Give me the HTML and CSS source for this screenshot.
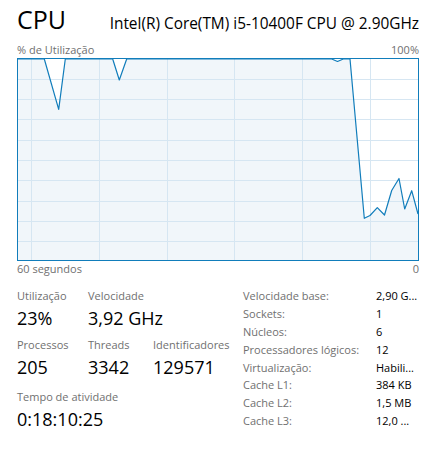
FILE: index.html
```html
<!DOCTYPE html>
<html lang="pt">
	<head>
		<meta charset="UTF-8">
		<title>CPU</title>
		<link rel="stylesheet" href="styles.css">
	</head>
	<body>
		<div class="page">
			<!--titulo-->
			<div class="header">
				<span class="title">CPU</span>
				<span class="model">Intel(R) Core(TM) i5-10400F CPU @ 2.90GHz</span>
			</div>

			<!--grafico-->
			<div class="axis">
				<span>% de Utilização</span>
				<span>100%</span>
			</div>
			<svg class="chart" width="402" height="203" viewBox="0 0 402 203">
				<rect x="0" y="0" width="402" height="203" fill="#fff" />
				<polygon class="fill" points="0,1 27.3,1 41.7,51.3 48.3,1 95.7,1 102.3,22 109.7,1 314.7,1 320.5,3.5 326.3,1 333,1 347.3,160.3 353,157.5 360.3,149.7 367.5,157 374.7,132.5 382,120.5 387.7,151 394.7,132.7 401,156 401,202 0,202" />
				<g class="grid">
					<line x1="14.5" y1="0" x2="14.5" y2="203" />
					<line x1="82.5" y1="0" x2="82.5" y2="203" />
					<line x1="150.5" y1="0" x2="150.5" y2="203" />
					<line x1="217.5" y1="0" x2="217.5" y2="203" />
					<line x1="285.5" y1="0" x2="285.5" y2="203" />
					<line x1="353.5" y1="0" x2="353.5" y2="203" />
					<line x1="0" y1="21.5" x2="402" y2="21.5" />
					<line x1="0" y1="41.5" x2="402" y2="41.5" />
					<line x1="0" y1="61.5" x2="402" y2="61.5" />
					<line x1="0" y1="82.5" x2="402" y2="82.5" />
					<line x1="0" y1="102.5" x2="402" y2="102.5" />
					<line x1="0" y1="122.5" x2="402" y2="122.5" />
					<line x1="0" y1="143.5" x2="402" y2="143.5" />
					<line x1="0" y1="163.5" x2="402" y2="163.5" />
					<line x1="0" y1="183.5" x2="402" y2="183.5" />
				</g>
				<polyline class="line" points="0,1 27.3,1 41.7,51.3 48.3,1 95.7,1 102.3,22 109.7,1 314.7,1 320.5,3.5 326.3,1 333,1 347.3,160.3 353,157.5 360.3,149.7 367.5,157 374.7,132.5 382,120.5 387.7,151 394.7,132.7 401,156" />
				<rect class="frame" x="0.5" y="0.5" width="401" height="202" />
			</svg>
			<div class="axis axis-bottom">
				<span>60 segundos</span>
				<span>0</span>
			</div>

			<!--dados-->
			<div class="stats">
				<div class="live">
					<div class="cell">
						<div class="label">Utilização</div>
						<div class="value">23%</div>
					</div>
					<div class="cell">
						<div class="label">Velocidade</div>
						<div class="value">3,92 GHz</div>
					</div>
					<div class="cell"></div>
					<div class="cell">
						<div class="label">Processos</div>
						<div class="value">205</div>
					</div>
					<div class="cell">
						<div class="label">Threads</div>
						<div class="value">3342</div>
					</div>
					<div class="cell">
						<div class="label">Identificadores</div>
						<div class="value">129571</div>
					</div>
					<div class="cell wide">
						<div class="label">Tempo de atividade</div>
						<div class="value">0:18:10:25</div>
					</div>
				</div>
				<div class="specs">
					<span class="key">Velocidade base:</span><span>2,90 G...</span>
					<span class="key">Sockets:</span><span>1</span>
					<span class="key">Núcleos:</span><span>6</span>
					<span class="key">Processadores lógicos:</span><span>12</span>
					<span class="key">Virtualização:</span><span>Habili...</span>
					<span class="key">Cache L1:</span><span>384 KB</span>
					<span class="key">Cache L2:</span><span>1,5 MB</span>
					<span class="key">Cache L3:</span><span>12,0 ...</span>
				</div>
			</div>
		</div>
	</body>
</html>
```

FILE: styles.css
```css
* {
	margin: 0;
	padding: 0
}

body {
	background-color: #fff;
	font-family: "Open Sans", "Noto Sans", sans-serif;
	color: #000;
}

.page {
	width: 402px;
	padding: 3px 18px 0 17px;
}

.header {
	display: flex;
	justify-content: space-between;
	align-items: baseline;
	height: 32px;
	line-height: 32px;
}

.title {
	font-size: 25px;
}

.model {
	font-size: 15.4px;
	line-height: 20px;
}

.axis {
	display: flex;
	justify-content: space-between;
	margin-top: 7px;
	font-size: 11px;
	line-height: 15px;
	color: #707070;
}

.axis-bottom {
	margin-top: 0;
}

.chart {
	display: block;
	margin-top: 1px;
}

.chart .fill {
	fill: #f1f6fa;
}

.chart .grid line {
	stroke: #d6e6f2;
	stroke-width: 1;
}

.chart .line {
	fill: none;
	stroke: #117dbb;
	stroke-width: 1.2;
	stroke-linejoin: round;
}

.chart .frame {
	fill: none;
	stroke: #117dbb;
	stroke-width: 1;
}

.stats {
	display: flex;
	margin-top: 10px;
}

.live {
	display: grid;
	grid-template-columns: 71px 65px auto;
	align-content: start;
	padding-top: 2px;
	width: 226px;
}

.cell {
	margin-bottom: 7px;
}

.cell.wide {
	grid-column: 1 / 4;
	margin-top: 3px;
}

.label {
	font-size: 11px;
	line-height: 15px;
	color: #707070;
	white-space: nowrap;
}

.value {
	margin-top: 3px;
	font-size: 18px;
	line-height: 24px;
	white-space: nowrap;
}

.specs {
	display: grid;
	grid-template-columns: 133px auto;
	grid-auto-rows: 17.9px;
	align-content: start;
	padding-top: 1px;
	font-size: 11px;
	line-height: 17.9px;
	white-space: nowrap;
}

.specs .key {
	color: #707070;
}
```
